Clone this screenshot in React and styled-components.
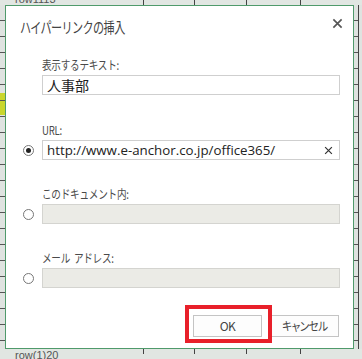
import React from 'react'
import styled, { createGlobalStyle } from 'styled-components'

const GlobalStyle = createGlobalStyle`
  html, body { margin: 0; padding: 0; background: #e4e4e4; }
  body {
    font-family: "Noto Sans CJK JP", "Noto Sans", sans-serif;
    font-feature-settings: "palt";
  }
`

const Frame = styled.div`
  width: 362px;
  height: 359px;
  display: grid;
  grid-template-columns: 5px 349px 8px;
  grid-template-rows: 5px 344px 10px;
  background: #e4e4e4;
  overflow: hidden;
`

const TopStrip = styled.div`
  grid-column: 1 / -1;
  grid-row: 1;
  position: relative;
  overflow: hidden;
  background:
    linear-gradient(#444, #444) 143px 0 / 1px 5px no-repeat,
    linear-gradient(#444, #444) 194px 0 / 1px 5px no-repeat,
    linear-gradient(#444, #444) 246px 0 / 1px 5px no-repeat,
    linear-gradient(#444, #444) 300px 0 / 1px 5px no-repeat,
    #e1e6e2;
`

const BottomStrip = styled(TopStrip)`
  grid-row: 3;
`

const StripText = styled.span`
  position: absolute;
  left: 15px;
  font: 11px/12px "Liberation Sans", sans-serif;
  color: #555;
  top: ${p => (p.$bottom ? '0px' : '-7px')};
`

const SideStrip = styled.div`
  grid-row: 2;
  background:
    repeating-linear-gradient(
      to bottom,
      transparent 0 15px,
      #555 15px 16px
    ),
    ${p => (p.$left ? 'linear-gradient(transparent 0 88px, #c9d62c 88px 110px, transparent 110px)' : 'none')},
    #dfe3e0;
`

const LeftStrip = styled(SideStrip)`
  grid-column: 1;
`

const RightStrip = styled(SideStrip)`
  grid-column: 3;
  box-shadow: inset -3px 0 0 #dfe3e0, inset -4px 0 0 #444;
`

const Dialog = styled.div`
  grid-column: 2;
  grid-row: 2;
  box-sizing: border-box;
  border: 1px solid #4f9a6b;
  background: #fff;
  display: flex;
  flex-direction: column;
`

const Header = styled.div`
  display: flex;
  align-items: center;
  justify-content: space-between;
  padding: 11px 14px 0 14px;
  height: 20px;
`

/* Meiryo UI is a condensed face: squeeze the CJK text horizontally */
const Title = styled.h1`
  margin: 0;
  font: 400 15px/20px "Noto Sans CJK JP", sans-serif;
  letter-spacing: -0.8px;
  color: #444;
  transform: scaleX(0.74);
  transform-origin: left center;
  white-space: nowrap;
`

const CloseButton = styled.button`
  border: 0;
  background: none;
  padding: 0;
  width: 11px;
  height: 11px;
  margin-top: -7px;
  margin-right: -4px;
  display: flex;
`

const Body = styled.div`
  padding: 0 13px 0 14px;
  display: flex;
  flex-direction: column;
`

const Field = styled.div`
  display: grid;
  grid-template-columns: 22px 298px;
  grid-template-rows: 14px 20px;
  row-gap: 3px;
  margin-top: ${p => p.$top}px;
`

const Label = styled.label`
  grid-column: 2;
  grid-row: 1;
  justify-self: start;
  font: 12px/14px "Noto Sans CJK JP", sans-serif;
  letter-spacing: -0.3px;
  color: #4a4a4a;
  white-space: pre;
  transform: scaleX(0.8);
  transform-origin: left center;
`

const Radio = styled.span`
  grid-column: 1;
  grid-row: 2;
  align-self: center;
  margin-left: 3px;
  box-sizing: border-box;
  width: 11px;
  height: 11px;
  border-radius: 50%;
  border: 1px solid #777;
  background: #fff;
  display: flex;
  align-items: center;
  justify-content: center;

  &::after {
    content: "";
    display: ${p => (p.$checked ? 'block' : 'none')};
    width: 5px;
    height: 5px;
    border-radius: 50%;
    background: #222;
  }
`

const Input = styled.div`
  grid-column: 2;
  grid-row: 2;
  box-sizing: border-box;
  border: 1px solid ${p => (p.$disabled ? '#d4d4d0' : '#cfcfcf')};
  background: ${p => (p.$disabled ? '#ebebe6' : '#fff')};
  display: flex;
  align-items: center;
  justify-content: space-between;
  padding: 0 6px 0 4px;
  font: 14px/18px "Noto Sans CJK JP", sans-serif;
  color: #222;
`

const UrlText = styled.span`
  font: 13.3px/18px "Open Sans", "Noto Sans", sans-serif;
  color: #222;
`

const Footer = styled.div`
  display: flex;
  justify-content: flex-end;
  gap: 9px;
  margin-top: 27px;
  padding-right: 14px;
`

const Highlight = styled.div`
  position: relative;

  &::after {
    content: "";
    position: absolute;
    top: -10px;
    bottom: -6px;
    left: -8px;
    right: -10px;
    border: 4px solid #e8202a;
    pointer-events: none;
  }
`

const Button = styled.button`
  box-sizing: border-box;
  width: ${p => p.$w}px;
  height: 22px;
  border: 1px solid #c4c4c4;
  background: #fdfdfd;
  font: 12px/20px "Noto Sans CJK JP", sans-serif;
  font-feature-settings: "palt";
  letter-spacing: -0.5px;
  color: #444;
  padding: 0;
  display: flex;
  align-items: center;
  justify-content: center;
`

const ButtonText = styled.span`
  display: inline-block;
  transform: scaleX(0.88);
`

const Cross = ({ size = 12, stroke = 1.6, color = '#555' }) => (
  <svg width={size} height={size} viewBox="0 0 12 12">
    <path d="M1.5 1.5 L10.5 10.5 M10.5 1.5 L1.5 10.5" stroke={color} strokeWidth={stroke} fill="none" />
  </svg>
)

export default function App() {
  return (
    <>
      <GlobalStyle />
      <Frame>
        <TopStrip>
          <StripText>row1113</StripText>
        </TopStrip>
        <LeftStrip $left />
        <Dialog>
          <Header>
            <Title>ハイパーリンクの挿入</Title>
            <CloseButton>
              <Cross size={11} stroke={1.8} color="#555" />
            </CloseButton>
          </Header>
          <Body>
            <Field $top={21}>
              <Label>表示するテキスト:</Label>
              <Input>人事部</Input>
            </Field>
            <Field $top={28}>
              <Label>URL:</Label>
              <Radio $checked />
              <Input>
                <UrlText>http://www.e-anchor.co.jp/office365/</UrlText>
                <Cross size={9} stroke={1.6} color="#333" />
              </Input>
            </Field>
            <Field $top={27}>
              <Label>このドキュメント内:</Label>
              <Radio />
              <Input $disabled />
            </Field>
            <Field $top={27}>
              <Label>{'メール  アドレス:'}</Label>
              <Radio />
              <Input $disabled />
            </Field>
          </Body>
          <Footer>
            <Highlight>
              <Button $w={69}>OK</Button>
            </Highlight>
            <Button $w={68}>
              <ButtonText>キャンセル</ButtonText>
            </Button>
          </Footer>
        </Dialog>
        <RightStrip />
        <BottomStrip>
          <StripText $bottom>row(1)20</StripText>
        </BottomStrip>
      </Frame>
    </>
  )
}
